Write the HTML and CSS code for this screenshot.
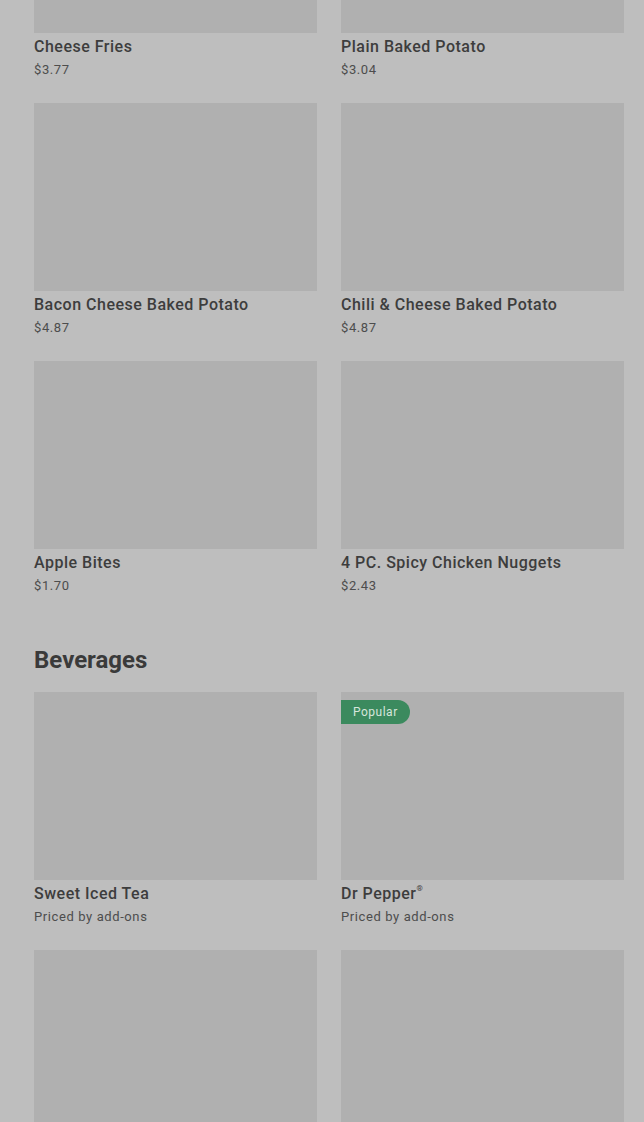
FILE: index.html
```html
<!DOCTYPE html>
<html lang="en">
<head>
<meta charset="utf-8">
<title>Menu</title>
<link rel="stylesheet" href="styles.css">
</head>
<body>
<main class="menu">
  <section class="section">
    <div class="grid">
      <div class="item">
        <div class="thumb thumb-cut"></div>
        <div class="name">Cheese Fries</div>
        <div class="price">$3.77</div>
      </div>
      <div class="item">
        <div class="thumb thumb-cut"></div>
        <div class="name">Plain Baked Potato</div>
        <div class="price">$3.04</div>
      </div>
      <div class="item">
        <div class="thumb"></div>
        <div class="name">Bacon Cheese Baked Potato</div>
        <div class="price">$4.87</div>
      </div>
      <div class="item">
        <div class="thumb"></div>
        <div class="name">Chili &amp; Cheese Baked Potato</div>
        <div class="price">$4.87</div>
      </div>
      <div class="item">
        <div class="thumb"></div>
        <div class="name">Apple Bites</div>
        <div class="price">$1.70</div>
      </div>
      <div class="item">
        <div class="thumb"></div>
        <div class="name">4 PC. Spicy Chicken Nuggets</div>
        <div class="price">$2.43</div>
      </div>
    </div>
  </section>
  <section class="section section-spaced">
    <h2 class="section-title">Beverages</h2>
    <div class="grid">
      <div class="item">
        <div class="thumb"></div>
        <div class="name">Sweet Iced Tea</div>
        <div class="price">Priced by add-ons</div>
      </div>
      <div class="item">
        <div class="thumb"><span class="badge">Popular</span></div>
        <div class="name">Dr Pepper<sup class="reg">®</sup></div>
        <div class="price">Priced by add-ons</div>
      </div>
      <div class="item">
        <div class="thumb"></div>
        <div class="name">&nbsp;</div>
        <div class="price">&nbsp;</div>
      </div>
      <div class="item">
        <div class="thumb"></div>
        <div class="name">&nbsp;</div>
        <div class="price">&nbsp;</div>
      </div>
    </div>
  </section>
</main>
</body>
</html>
```
FILE: styles.css
```css
html, body {
  margin: 0;
  padding: 0;
  background: #bebebe;
  height: 1122px;
  overflow: hidden;
}
body {
  font-family: Roboto, "Liberation Sans", sans-serif;
  color: #3a3a3a;
}
.menu {
  padding: 0 20px 0 34px;
}
.grid {
  display: grid;
  grid-template-columns: 283px 283px;
  column-gap: 24px;
  row-gap: 23px;
}
.item {
  display: flex;
  flex-direction: column;
}
.thumb {
  position: relative;
  height: 188px;
  background: #b0b0b0;
}
.thumb-cut {
  height: 33px;
}
.name {
  margin-top: 2px;
  font-size: 16px;
  line-height: 24px;
  font-weight: 500;
  letter-spacing: 0.5px;
  color: #3d3d3d;
  white-space: nowrap;
}
.reg {
  font-size: 8px;
  vertical-align: top;
  line-height: 14px;
  letter-spacing: 0;
}
.price {
  margin-top: 1px;
  font-size: 13px;
  line-height: 20px;
  letter-spacing: 0.6px;
  color: #4d4d4d;
}
.section-spaced {
  margin-top: 48px;
}
.section-title {
  margin: 0 0 16px;
  font-size: 24px;
  line-height: 32px;
  font-weight: 700;
  color: #3a3a3a;
}
.badge {
  position: absolute;
  left: 0;
  top: 8px;
  height: 24px;
  line-height: 24px;
  padding: 0 12px;
  background: #3b8a5e;
  color: #d6e6dc;
  font-size: 12px;
  letter-spacing: 0.5px;
  border-radius: 0 12px 12px 0;
}
```
